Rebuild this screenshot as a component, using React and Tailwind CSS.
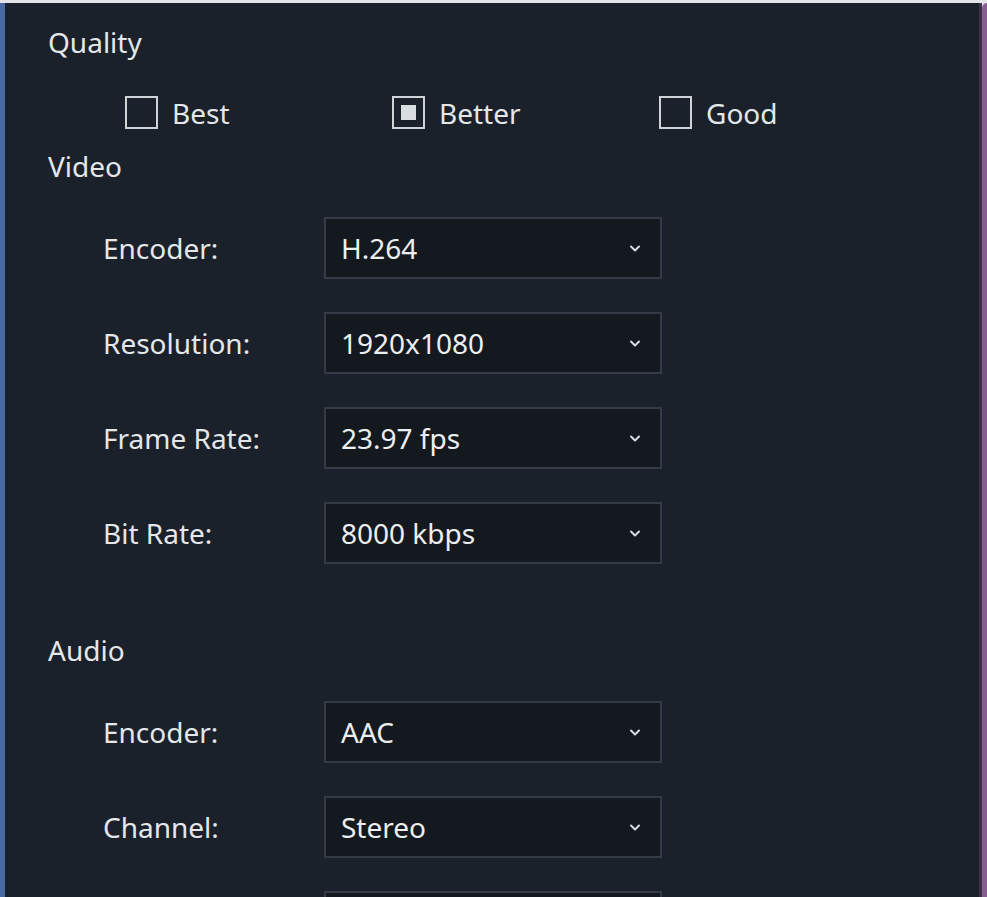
import React from "react";

const font = { fontFamily: '"Noto Sans", "Open Sans", sans-serif' };

function Chevron() {
  return (
    <svg width="14" height="9" viewBox="0 0 14 9" className="text-[#d7dbe0]">
      <polyline points="3,2.5 7,6.5 11,2.5" fill="none" stroke="currentColor" strokeWidth="2" strokeLinecap="round" strokeLinejoin="round" />
    </svg>
  );
}

function Row({ label, value }) {
  return (
    <div className="flex items-center h-[62px]">
      <div className="w-[276px] pl-[55px] text-[28px] text-[#e4e7ea]">{label}</div>
      <div className="w-[338px] h-[62px] flex items-center justify-between pl-[15px] pr-[18px] bg-[#141920] border-2 border-[#343b46]">
        <span className="text-[28px] text-[#eceef0]">{value}</span>
        <Chevron />
      </div>
    </div>
  );
}

function Check({ label, checked }) {
  return (
    <div className="flex items-center gap-[14px]">
      <div className="w-[33px] h-[33px] border-2 border-[#cfd3d8] flex items-center justify-center shrink-0">
        {checked && <div className="w-[15px] h-[15px] bg-[#d9dce0]" />}
      </div>
      <span className="text-[28px] text-[#e4e7ea]">{label}</span>
    </div>
  );
}

export default function App() {
  return (
    <div className="w-[987px] h-[897px] bg-[#e3e5e8] overflow-hidden flex flex-col" style={font}>
      <div className="h-[3px] shrink-0" />
      <div className="flex flex-1 min-h-0">
        <div className="w-[5px] bg-[#4a6aa6] shrink-0" />
        <div className="flex-1 bg-[#1b212a] pl-[43px] pt-[21px] leading-[36px]">
          <div className="text-[28px] text-[#e4e7ea]">Quality</div>
          <div className="flex items-center mt-[36px] pl-[77px] h-[33px]">
            <div className="w-[267px]"><Check label="Best" /></div>
            <div className="w-[267px]"><Check label="Better" checked /></div>
            <Check label="Good" />
          </div>
          <div className="text-[28px] text-[#e4e7ea] mt-[19px]">Video</div>
          <div className="flex flex-col gap-[33px] mt-[33px]">
            <Row label="Encoder:" value="H.264" />
            <Row label="Resolution:" value="1920x1080" />
            <Row label="Frame Rate:" value="23.97 fps" />
            <Row label="Bit Rate:" value="8000 kbps" />
          </div>
          <div className="text-[28px] text-[#e4e7ea] mt-[68px]">Audio</div>
          <div className="flex flex-col gap-[33px] mt-[33px]">
            <Row label="Encoder:" value="AAC" />
            <Row label="Channel:" value="Stereo" />
            <div className="flex h-[62px]">
              <div className="w-[276px]" />
              <div className="w-[338px] h-[62px] bg-[#141920] border-2 border-[#343b46]" />
            </div>
          </div>
        </div>
        <div className="w-[3px] bg-[#3a3343] shrink-0" />
        <div className="w-[5px] bg-[#8a5c94] rounded-tl-[6px] shrink-0" />
      </div>
    </div>
  );
}
